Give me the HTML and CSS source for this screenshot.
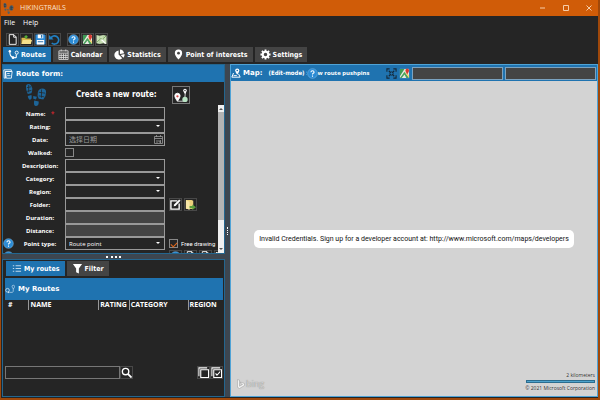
FILE: index.html
```html
<!DOCTYPE html>
<html lang="en">
<head>
    <meta charset="UTF-8">
    <meta name="viewport" content="width=device-width, initial-scale=1.0">
    <title>HIKINGTRAILS</title>
    <link rel="stylesheet" href="styles.css">
</head>
<body>
    <!-- shared icons -->
    <svg class="sprite" aria-hidden="true">
        <symbol id="steps" viewBox="0 0 24 24">
            <path d="M1 3q0-3 3-3t4 5q0 3-1 5l-4 1q-2-4-2-8zM3 13l4-1q1 4-1 5t-3-4zM14 9q1-4 5-4t4 4q0 5-3 8l-5-1q-2-3-1-7zM10 18l5 1q0 5-3 5t-2-6zM9 13l4 1-1 3-3-1z"/>
            <path d="M2 4l5-1M2 8l5-1M15 9l7 1M15 13l6 1M4 1v8M18 6v9" fill="none" stroke="#252525" stroke-width=".8"/>
        </symbol>
        <symbol id="help" viewBox="0 0 12 12">
            <circle cx="6" cy="6" r="5.300" fill="#2b8bd4" stroke="#8cc4ee" stroke-width=".5"/>
            <path d="M4.300 4.700Q4.300 3 6 3t1.700 1.500Q7.700 5.300 6.700 5.800 6 6.200 6 7.200M6 8.300v1.200" fill="none" stroke="#fff" stroke-width="1.200"/>
        </symbol>
        <symbol id="map" viewBox="0 0 12 12">
            <path d="M1 1h10v10H1z" fill="#e8e8e0"/>
            <path d="M1 1h5L1 9z" fill="#3e9b55"/>
            <path d="M1 11l5-7 5 7H8L6 7l-3 4z" fill="#49a35d"/>
            <path d="M6 4l5 4v3z" fill="#f3d36b"/>
            <path d="M7 3q0-2.500 2-2.500t2 2.500q0 1-2 4Q7 4 7 3z" fill="#d83b32"/>
        </symbol>
        <symbol id="page" viewBox="0 0 12 12">
            <path d="M2.500.7h5l2.500 2.500v8.100H2.500zM7.300.9v2.600H10" fill="none" stroke="#fff"/>
        </symbol>
        <symbol id="route" viewBox="0 0 12 12">
            <path d="M2 3q0 5 3 6t4 0V6" fill="none" stroke="currentColor" stroke-width="1.200"/>
            <circle cx="2" cy="2.500" r="1.300" fill="currentColor"/>
            <circle cx="5.500" cy="9.500" r="1.500" fill="currentColor"/>
            <circle cx="9.500" cy="4" r="1.700" fill="none" stroke="currentColor"/>
        </symbol>
        <symbol id="trail" viewBox="0 0 12 12">
            <path d="M6 10h3q1 0 1-4" fill="none" stroke="#cfe3f2" stroke-width=".8"/>
            <circle cx="3" cy="7.500" r="2.200" fill="none" stroke="#cfe3f2"/>
            <circle cx="4.500" cy="10" r="1" fill="#cfe3f2"/>
            <path d="M8.500 3a1.500 1.500 0 0 1 3 0q0 1-1.500 3-1.500-2-1.500-3z" fill="none" stroke="#cfe3f2" stroke-width=".8"/>
        </symbol>
    </svg>

    <header class="titlebar">
        <svg class="title-icon"><use href="#steps"/></svg>
        <span>HIKINGTRAILS</span>
        <div class="window-buttons">
            <button aria-label="Minimize"><svg viewBox="0 0 6 6"><path d="M0 3h5"/></svg></button>
            <button aria-label="Maximize"><svg viewBox="0 0 6 6"><path d="M.5.5h5v5h-5z"/></svg></button>
            <button aria-label="Close"><svg viewBox="0 0 6 6"><path d="M.5.5l5 5M5.500.5l-5 5"/></svg></button>
        </div>
    </header>

    <nav class="menu">
        <a href="#">File</a>
        <a href="#">Help</a>
    </nav>

    <div class="toolbar">
        <button class="tool" aria-label="New"><svg><use href="#page"/></svg></button>
        <button class="tool" aria-label="Open">
            <svg viewBox="0 0 12 12"><path d="M.5 4h4l1 1H11v6H.5z" fill="#d9b64b"/><path d="M2 6.500h10L10.500 11H.5z" fill="#f6e08c"/><path d="M3 3.500L5.500 1 8 3.500H6.500V5h-2V3.500z" fill="#57ae35"/></svg>
        </button>
        <button class="tool" aria-label="Save">
            <svg viewBox="0 0 12 12"><path d="M.5.5h10l1 1v10H.5z" fill="#2c8bd8"/><path d="M3 .5h6v4H3zM2 6.500h8v5H2z" fill="#fff"/><path d="M6.500 1h1.500v3H6.500zM3 8h6v1H3z" fill="#2c6fa8"/></svg>
        </button>
        <button class="tool" aria-label="Refresh">
            <svg viewBox="0 0 12 12"><path d="M2 4.500A4.500 4.500 0 1 1 3 9.800" fill="none" stroke="#2180c4" stroke-width="1.800"/><path d="M0 1v5h5z" fill="#2180c4"/></svg>
        </button>
        <button class="tool tool-group" aria-label="Help topics"><svg><use href="#help"/></svg></button>
        <button class="tool" aria-label="Maps"><svg><use href="#map"/></svg></button>
        <button class="tool" aria-label="Edit map">
            <svg viewBox="0 0 12 12"><path d="M.5 1l3.500 1 4-1 3.500 1v9L8 10l-4 1-3.500-1z" fill="#c8dfb5"/><path d="M1 9l4-4 2 1 4-4" fill="none" stroke="#6f9a58"/><path d="M4 2v9M8 1v9" stroke="#9dbf88" stroke-width=".6"/><path d="M6 6l4.500 4.500" stroke="#fff" stroke-width="1.500"/></svg>
        </button>
    </div>

    <div class="tabs">
        <button class="tab active"><svg><use href="#route"/></svg>Routes</button>
        <button class="tab">
            <svg viewBox="0 0 12 12"><path d="M1 2h10v9.500H1zM1 4.500h10M3.500.5v2M8.500.5v2M3.500 5v6M6 5v6M8.500 5v6M1 7h10M1 9.300h10" fill="none" stroke="#ddd" stroke-width=".9"/></svg>Calendar
        </button>
        <button class="tab">
            <svg viewBox="0 0 12 12"><path d="M5 1.500V6l4 4A5 5 0 1 1 5 1.500z" fill="#fff"/><path d="M6.500.5A5 5 0 0 1 11 4.500L6.500 5.500zM7.200 6.500l4.300-1q.3 2.500-1.200 4z" fill="#fff"/></svg>Statistics
        </button>
        <button class="tab">
            <svg viewBox="0 0 12 12"><path d="M6 .5a4 4 0 0 1 4 4Q10 7 6 11.500 2 7 2 4.500a4 4 0 0 1 4-4z" fill="#fff"/><circle cx="6" cy="4.500" r="1.500" fill="#444"/></svg>Point of interests
        </button>
        <button class="tab">
            <svg viewBox="0 0 12 12"><circle cx="6" cy="6" r="3" fill="none" stroke="#fff" stroke-width="2.200"/><path d="M6 .5v2M6 9.500v2M.5 6h2M9.500 6h2M2.100 2.100l1.500 1.500M8.400 8.400l1.500 1.500M2.100 9.900l1.500-1.500M8.400 3.600l1.500-1.500" stroke="#fff" stroke-width="2"/></svg>Settings
        </button>
    </div>

    <main class="workspace">
        <section class="panel form-panel">
            <h2 class="panel-title">
                <svg viewBox="0 0 12 12"><path d="M1 1h9v2H3v8H1.500zM3 3h8l-1 8H4z" fill="none" stroke="#fff"/><path d="M5 5.500h3M5 8h4" stroke="#fff"/></svg>Route form:
            </h2>
            <div class="form-scroll">
                <div class="form-body">
                    <div class="form-head">
                        <svg class="form-logo"><use href="#steps"/></svg>
                        <h3>Create a new route:</h3>
                        <button class="pin-button" aria-label="Add route">
                            <svg viewBox="0 0 18 18"><path d="M5 16h8l1-11" fill="none" stroke="#ddd"/><path d="M2 10a3 3 0 0 1 6 0q0 2-3 6-3-4-3-6z" fill="#fff" stroke="#fff"/><circle cx="5" cy="10.500" r="1.300" fill="#d64a4a"/><circle cx="13.500" cy="14" r="3" fill="#b9e4c4"/><path d="M11.500 4a2 2 0 0 1 4 0q0 1.500-2 4-2-2.500-2-4z" fill="#fff"/><circle cx="13.500" cy="4" r=".8" fill="#333"/></svg>
                        </button>
                    </div>
                    <form class="route-form">
                        <label for="name">Name: <b class="required">*</b></label>
                        <input type="text" id="name">
                        <label for="rating">Rating:</label>
                        <div class="select"><select id="rating"><option></option></select></div>
                        <label for="date">Date:</label>
                        <div class="date">
                            <input type="text" id="date" placeholder="选择日期">
                            <svg viewBox="0 0 9 9"><path d="M.5 1.500h8v7h-8zM.5 3.500h8M2.500 0v2M6.500 0v2M3 5v3M5 5v2h2M6.500 5v3" fill="none" stroke="#999" stroke-width=".8"/></svg>
                        </div>
                        <label for="walked">Walked:</label>
                        <input type="checkbox" id="walked">
                        <label for="description">Description:</label>
                        <input type="text" id="description">
                        <label for="category">Category:</label>
                        <div class="select"><select id="category"><option></option></select></div>
                        <label for="region">Region:</label>
                        <div class="select"><select id="region"><option></option></select></div>
                        <label for="folder">Folder:</label>
                        <input type="text" id="folder">
                        <div class="extra">
                            <button type="button" class="tool" aria-label="Edit folder">
                                <svg viewBox="0 0 12 12"><path d="M8 2H1v9h9V5" fill="none" stroke="#fff" stroke-width="1.500"/><path d="M4 8l.5-2L10 .5 11.500 2 6 7.500z" fill="#fff"/></svg>
                            </button>
                            <button type="button" class="tool" aria-label="Open folder">
                                <svg viewBox="0 0 12 12"><path d="M1 1h6l2 1v9H1z" fill="#ecd27c"/><path d="M1 1l4 2v9l-4-2z" fill="#f9e8a6"/><path d="M5 7.500h3V6l4 3-4 3v-2H5z" fill="#5b9e3c"/></svg>
                            </button>
                        </div>
                        <label for="duration">Duration:</label>
                        <input type="text" id="duration" class="readonly" readonly>
                        <label for="distance">Distance:</label>
                        <input type="text" id="distance" class="readonly" readonly>
                        <button type="button" class="help" aria-label="Point type help"><svg><use href="#help"/></svg></button>
                        <label for="pointtype">Point type:</label>
                        <div class="select"><select id="pointtype"><option>Route point</option></select></div>
                        <div class="extra free">
                            <input type="checkbox" id="free" checked>
                            <label for="free">Free drawing</label>
                        </div>
                        <button type="button" class="help" aria-label="Route points help"><svg><use href="#help"/></svg></button>
                        <span class="label">Route points:</span>
                        <div class="extra last">
                            <button type="button" class="tool" aria-label="Info"><svg><use href="#help"/></svg></button>
                            <button type="button" class="tool" aria-label="New point"><svg><use href="#page"/></svg></button>
                            <button type="button" class="tool" aria-label="Copy point"><svg><use href="#page"/></svg></button>
                            <button type="button" class="tool" aria-label="Find point"><svg><use href="#route"/></svg></button>
                        </div>
                    </form>
                </div>
                <div class="scrollbar"><i class="up"></i><i class="thumb"></i><i class="down"></i></div>
            </div>
        </section>

        <div class="splitter horizontal"></div>

        <section class="panel routes-panel">
            <div class="tabs">
                <button class="tab active">
                    <svg viewBox="0 0 12 12"><path d="M2 3h1.500M2 6h1.500M2 9h1.500M5 3h6M5 6h6M5 9h6" stroke="#cfe3f2"/></svg>My routes
                </button>
                <button class="tab">
                    <svg viewBox="0 0 12 12"><path d="M1 1h10L7.500 6v5.500l-3-1.500V6z" fill="#fff"/></svg>Filter
                </button>
            </div>
            <h2 class="panel-title list-title"><svg><use href="#trail"/></svg>My Routes</h2>
            <table class="routes">
                <thead>
                    <tr>
                        <th class="col-id">#</th>
                        <th class="col-name">NAME</th>
                        <th class="col-rating">RATING</th>
                        <th class="col-category">CATEGORY</th>
                        <th class="col-region">REGION</th>
                    </tr>
                </thead>
            </table>
            <div class="search">
                <input type="text" aria-label="Search routes">
                <button class="tool" aria-label="Search">
                    <svg viewBox="0 0 12 12"><circle cx="5" cy="5" r="3.500" fill="none" stroke="#fff" stroke-width="1.500"/><path d="M7.500 7.500l4 4" stroke="#fff" stroke-width="2"/></svg>
                </button>
                <button class="tool deselect" aria-label="Deselect all">
                    <svg viewBox="0 0 12 12"><path d="M3 3h8.500v8.500H3zM1 10V1h9" fill="none" stroke="#fff" stroke-width="1.200"/></svg>
                </button>
                <button class="tool" aria-label="Select all">
                    <svg viewBox="0 0 12 12"><path d="M3 3h8.500v8.500H3zM1 10V1h9M5 7l1.500 2L10 5" fill="none" stroke="#fff" stroke-width="1.200"/></svg>
                </button>
            </div>
        </section>

        <div class="splitter vertical"></div>

        <section class="panel map-panel">
            <div class="map-header">
                <h2>
                    <svg viewBox="0 0 12 12"><path d="M3 6L1 11h10L9 7" fill="none" stroke="#fff" stroke-width="1.200"/><path d="M5 3a2.500 2.500 0 0 1 5 0q0 2-2.500 5Q5 5 5 3z" fill="#fff"/><circle cx="7.500" cy="3" r="1" fill="#1f6fac"/><path d="M3 9h4" stroke="#fff"/></svg>Map:
                </h2>
                <span class="mode">(Edit-mode)</span>
                <div class="pushpins">
                    <span>Show route pushpins</span>
                    <button class="tool map-help" aria-label="Map help"><svg><use href="#help"/></svg></button>
                </div>
                <button class="tool focus" aria-label="Center map">
                    <svg viewBox="0 0 12 12"><path d="M1 4V1h3M8 1h3v3M11 8v3H8M4 11H1V8M3 3l2 2M9 3L7 5M3 9l2-2M9 9L7 7" fill="none" stroke="#15293a" stroke-width="1.200"/><circle cx="6" cy="6" r="1.800" fill="none" stroke="#15293a"/></svg>
                </button>
                <button class="tool" aria-label="Open maps"><svg><use href="#map"/></svg></button>
                <input type="text" aria-label="Latitude">
                <input type="text" aria-label="Longitude">
            </div>
            <div class="map">
                <p class="notice">Invalid Credentials. Sign up for a developer account at: http://www.microsoft.com/maps/developers</p>
                <div class="bing">
                    <svg viewBox="0 0 8 10"><path d="M.5.5l2 .7v6l3-1.700-1.500-.7-.7-1.800 4.200 1.500v2l-5 3-2-1.200z" fill="#f4f4f4" stroke="#999" stroke-width=".5"/></svg>
                    <span>bing</span>
                </div>
                <div class="scale">
                    <span>2 kilometers</span>
                    <i></i>
                    <span>© 2021 Microsoft Corporation</span>
                </div>
            </div>
        </section>
    </main>
</body>
</html>
```

FILE: styles.css
```css
* {
    box-sizing: border-box;
}

body {
    margin: 0;
    height: 100vh;
    display: flex;
    flex-direction: column;
    overflow: hidden;
    background-color: #252525;
    border: solid #a0480a;
    border-width: 0 2px 2px 1px;
    color: #fff;
    font-family: "Open Sans", "Noto Sans CJK SC", sans-serif;
    font-size: 7px;
    line-height: 10px;
}

button, input, select {
    font: inherit;
    color: inherit;
    margin: 0;
    padding: 0;
    border: none;
    background: none;
    border-radius: 0;
}

h2, h3, p {
    margin: 0;
}

svg {
    display: block;
    flex: none;
}

.sprite {
    position: absolute;
    width: 0;
    height: 0;
}

/* window */
.titlebar {
    display: flex;
    align-items: center;
    gap: 6px;
    height: 16px;
    margin: 0 -2px 0 -1px;
    padding-left: 3px;
    background-color: #d05c08;
    color: #fbe3d0;
    flex: none;
}

.title-icon {
    width: 11px;
    height: 13px;
    fill: #4d606c;
}

.window-buttons {
    display: flex;
    margin-left: auto;
}

.window-buttons button {
    width: 23px;
    height: 16px;
    display: grid;
    place-items: center;
}

.window-buttons svg {
    width: 6px;
    height: 6px;
    fill: none;
    stroke: #f6cda8;
}

.menu {
    display: flex;
    gap: 8px;
    padding: 2px 3px;
    height: 17px;
    flex: none;
}

.menu a {
    color: #fff;
    text-decoration: none;
}

.toolbar {
    display: flex;
    gap: 1px;
    padding-left: 5px;
    height: 14px;
    flex: none;
}

.tool {
    width: 13px;
    height: 13px;
    border: 1px solid #484848;
    display: grid;
    place-items: center;
    flex: none;
}

.tool svg {
    width: 11px;
    height: 11px;
}

.tool-group {
    margin-left: 5px;
}

.tabs {
    display: flex;
    gap: 2px;
    padding-left: 2px;
    flex: none;
}

.tab {
    display: flex;
    align-items: center;
    gap: 2px;
    height: 15px;
    padding: 0 5px;
    background-color: #444;
    font-family: "DejaVu Sans Condensed", "DejaVu Sans", sans-serif;
    font-weight: bold;
    font-size: 7px;
}

.tab svg {
    width: 11px;
    height: 11px;
}

.tab.active {
    background-color: #1f73b0;
}

/* panels */
.workspace {
    flex: 1;
    min-height: 0;
    display: grid;
    grid-template-columns: 223fr 5px 368fr;
    grid-template-rows: 191fr 5px 138fr;
    margin: 2px 0 1px 1px;
    background-color: #3d4650;
}

.panel {
    display: flex;
    flex-direction: column;
    min-width: 0;
    min-height: 0;
    overflow: hidden;
    border: 1px solid #24668f;
    background-color: #252525;
}

.panel-title {
    display: flex;
    align-items: center;
    gap: 3px;
    height: 17px;
    background-color: #1f73b0;
    font: bold 7px/10px "DejaVu Sans", sans-serif;
    flex: none;
}

.panel-title svg {
    width: 10px;
    height: 10px;
}

.splitter {
    display: grid;
    place-items: center;
}

.splitter::before {
    content: "";
}

.horizontal::before {
    width: 15px;
    border-top: 2px dotted #fff;
}

.vertical {
    grid-column: 2;
    grid-row: 1 / 4;
}

.vertical::before {
    height: 8px;
    border-left: 1px dotted #fff;
}

/* route form */
.form-scroll {
    flex: 1;
    min-height: 0;
    display: flex;
    overflow: hidden;
}

.form-body {
    flex: 1;
    min-width: 0;
}

.form-head {
    display: flex;
    align-items: center;
    height: 25px;
}

.form-logo {
    width: 22px;
    height: 24px;
    margin-left: 22px;
    fill: #1d6599;
}

.form-head h3 {
    margin-left: 29px;
    font: bold 8px/10px "DejaVu Sans Condensed", "DejaVu Sans", sans-serif;
    white-space: nowrap;
}

.pin-button {
    width: 18px;
    height: 18px;
    margin-left: 15px;
    border: 1px solid #777;
}

.pin-button svg {
    width: 16px;
    height: 16px;
}

.route-form {
    display: grid;
    grid-template-columns: 12px 50px 100px minmax(0, 1fr);
    grid-auto-rows: 13px;
    align-items: center;
    font-size: 6px;
}

.route-form > label,
.label {
    grid-column: 2;
    justify-self: center;
    font-weight: bold;
    white-space: nowrap;
}

.required {
    color: #b3262c;
    margin-left: 4px;
}

.route-form > input[type="text"],
.select,
.date {
    grid-column: 3;
    width: 100%;
    height: 13px;
    border: 1px solid #999;
    padding: 0 3px;
}

.route-form > .readonly {
    background-color: #444;
}

.select {
    position: relative;
}

.select select {
    width: 100%;
    height: 11px;
    appearance: none;
    display: block;
}

.select::after {
    content: "";
    position: absolute;
    right: 4px;
    top: 4px;
    border: 2px solid transparent;
    border-top-color: #fff;
    pointer-events: none;
}

.date {
    display: flex;
    align-items: center;
    padding-right: 1px;
}

.date input {
    flex: 1;
    min-width: 0;
    font-size: 7px;
}

.date input::placeholder {
    color: #999;
}

.date svg {
    width: 9px;
    height: 9px;
}

input[type="checkbox"] {
    appearance: none;
    width: 9px;
    height: 9px;
    border: 1px solid #888;
    display: grid;
    place-items: center;
    flex: none;
}

input[type="checkbox"]:checked::before {
    content: "";
    width: 5px;
    height: 3px;
    border: solid #e0661a;
    border-width: 0 0 1px 1px;
    transform: rotate(-45deg);
}

.extra {
    grid-column: 4;
    display: flex;
    align-items: center;
    gap: 2px;
    padding-left: 4px;
}

.free {
    gap: 3px;
    white-space: nowrap;
    font-family: Roboto, sans-serif;
}

.last {
    overflow: hidden;
}

.help {
    grid-column: 1;
    width: 11px;
    height: 11px;
}

.help svg {
    width: 11px;
    height: 11px;
}

.scrollbar {
    width: 6px;
    margin-top: 23px;
    display: flex;
    flex-direction: column;
    align-items: center;
    gap: 2px;
    padding: 3px 0;
    background-color: #f0f0f0;
    flex: none;
}

.scrollbar .up {
    border: 2px solid transparent;
    border-top: none;
    border-bottom-color: #555;
}

.scrollbar .thumb {
    width: 6px;
    flex: 0 1 76%;
    background-color: #b4b4b4;
}

.scrollbar .down {
    margin-top: auto;
    border: 2px solid transparent;
    border-bottom: none;
    border-top-color: #555;
}

/* my routes */
.routes-panel {
    padding: 1px 1px 0 2px;
}

.routes-panel .tabs {
    padding-left: 1px;
}

.list-title {
    height: 22px;
    margin-top: 2px;
}

.routes {
    width: 100%;
    table-layout: fixed;
    border-collapse: collapse;
}

.routes th {
    padding: 0 0 0 1px;
    text-align: left;
    font-weight: bold;
    font-size: 7px;
    white-space: nowrap;
    border-left: 1px solid #999;
}

.routes .col-id {
    width: 11%;
    padding-left: 3px;
    border-left: none;
}

.routes .col-name {
    width: 32%;
}

.routes .col-rating {
    width: 14%;
}

.routes .col-category {
    width: 27%;
}

.search {
    display: flex;
    margin-top: auto;
    margin-bottom: 17px;
}

.search input {
    width: 115px;
    height: 13px;
    border: 1px solid #777;
}

.search .deselect {
    margin-left: auto;
}

/* map */
.map-panel {
    grid-column: 3;
    grid-row: 1 / 4;
    border-color: #4fa3d6;
}

.map-header {
    display: flex;
    align-items: center;
    height: 16px;
    padding-right: 1px;
    background-color: #1f73b0;
    font: bold 6px/10px "DejaVu Sans Condensed", "DejaVu Sans", sans-serif;
    flex: none;
}

.map-header h2 {
    display: flex;
    align-items: center;
    gap: 2px;
    font: bold 7px/10px "DejaVu Sans", sans-serif;
}

.map-header h2 svg {
    width: 10px;
    height: 10px;
}

.mode {
    margin-left: 6px;
}

.map-header .tool {
    width: 11px;
    height: 11px;
    border: none;
}

.pushpins {
    position: relative;
    margin-left: 2px;
    white-space: nowrap;
    font: bold 6px/10px "Open Sans", sans-serif;
}

.map-header .map-help {
    position: absolute;
    left: 0;
    top: 0;
    background-color: #1f73b0;
}

.map-header .focus {
    margin: 0 2px 0 auto;
}

.map-header input {
    width: 25%;
    height: 13px;
    margin-left: 2px;
    border: 1px solid #7ba2c0;
    background-color: #444;
}

.map {
    flex: 1;
    position: relative;
    display: grid;
    place-items: center;
    background-color: #d3d3d3;
    color: #222;
}

.notice {
    padding: 4px 5px;
    border-radius: 5px;
    background-color: #fff;
    color: #111;
    font-family: Roboto, sans-serif;
    white-space: nowrap;
}

.bing {
    position: absolute;
    left: 6px;
    bottom: 7px;
    display: flex;
    align-items: center;
    gap: 1px;
    color: #d3d3d3;
    font-size: 9px;
    text-shadow: 0 0 1px #777;
}

.bing svg {
    width: 8px;
    height: 10px;
}

.scale {
    position: absolute;
    right: 2px;
    bottom: 3px;
    display: flex;
    flex-direction: column;
    align-items: flex-end;
    font-size: 5px;
    text-shadow: 0 0 1px #fff;
}

.scale i {
    width: 69px;
    height: 3px;
    background-color: #4fa3cc;
    border: 1px solid #2c6d8f;
}
```
